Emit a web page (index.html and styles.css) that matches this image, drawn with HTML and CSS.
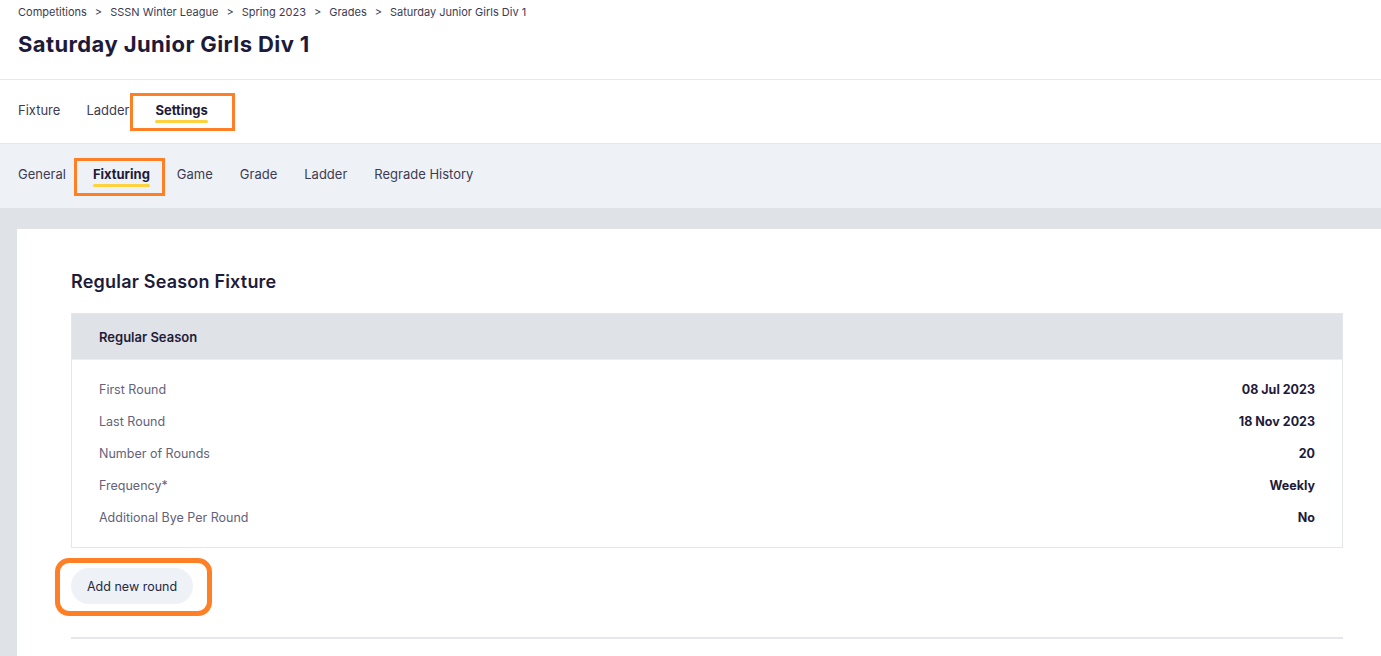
FILE: index.html
```html
<!DOCTYPE html>
<html lang="en">
<head>
    <meta charset="UTF-8">
    <title>Saturday Junior Girls Div 1</title>
    <link rel="stylesheet" href="styles.css">
</head>
<body>
    <header class="page-head">
        <nav class="crumbs">
            <a>Competitions</a><span class="sep">&gt;</span>
            <a>SSSN Winter League</a><span class="sep">&gt;</span>
            <a>Spring 2023</a><span class="sep">&gt;</span>
            <a>Grades</a><span class="sep">&gt;</span>
            <a>Saturday Junior Girls Div 1</a>
        </nav>
        <h1>Saturday Junior Girls Div 1</h1>
    </header>

    <div class="tabs">
        <a class="tab">Fixture</a>
        <a class="tab">Ladder</a>
        <a class="tab active marked">Settings</a>
    </div>

    <div class="subtabs">
        <a class="tab">General</a>
        <a class="tab active marked">Fixturing</a>
        <a class="tab">Game</a>
        <a class="tab">Grade</a>
        <a class="tab">Ladder</a>
        <a class="tab">Regrade History</a>
    </div>

    <main class="content">
        <section class="card">
            <h2>Regular Season Fixture</h2>
            <div class="panel">
                <div class="panel-head">Regular Season</div>
                <div class="panel-body">
                    <div class="row"><span>First Round</span><b>08 Jul 2023</b></div>
                    <div class="row"><span>Last Round</span><b>18 Nov 2023</b></div>
                    <div class="row"><span>Number of Rounds</span><b>20</b></div>
                    <div class="row"><span>Frequency*</span><b>Weekly</b></div>
                    <div class="row"><span>Additional Bye Per Round</span><b>No</b></div>
                </div>
            </div>
            <div class="actions">
                <button class="pill-btn marked-round">Add new round</button>
            </div>
            <hr class="divider">
        </section>
    </main>
</body>
</html>
```

FILE: styles.css
```css
body {
    margin: 0;
    font-family: Inter, "Noto Sans", sans-serif;
    color: #1e1b3a;
    background: #dfe2e7;
    overflow: hidden;
}
.page-head {
    background: white;
    padding: 4px 18px 0;
    height: 75px;
    border-bottom: 1px solid #e6e8eb;
}
.crumbs {
    font-size: 11px;
    color: #3d3b52;
    display: flex;
    align-items: center;
    height: 15px;
}
.crumbs .sep {
    margin: 0 8px;
}
h1 {
    margin: 12px 0 0;
    font-size: 22px;
    font-weight: 700;
    letter-spacing: 0.4px;
    color: #1e1b3a;
}
.tabs, .subtabs {
    display: flex;
    align-items: center;
    padding: 0 18px;
}
.tabs {
    background: white;
    height: 63px;
    border-bottom: 1px solid #e3e6ea;
}
.subtabs {
    background: #eef2f7;
    height: 64px;
}
.tab {
    font-size: 13px;
    color: #3d3b52;
    margin-right: 26px;
    position: relative;
    padding: 4px 0 8px;
}
.subtabs .tab {
    margin-right: 27px;
}
.tab.active {
    font-weight: 700;
    color: #1e1b3a;
}
.tab.active::before {
    content: "";
    position: absolute;
    left: 0;
    right: 0;
    bottom: 3px;
    height: 3px;
    border-radius: 2px;
    background: #fcd23f;
}
.marked::after {
    content: "";
    position: absolute;
    border: 3px solid #ff7f27;
    left: -25px;
    right: -27px;
    top: -5px;
    bottom: -5px;
}
.subtabs .marked::after {
    left: -19px;
    right: -15px;
    top: -4px;
    bottom: -6px;
}
.content {
    padding: 21px 0 0 17px;
}
.card {
    background: white;
    padding: 42px 38px 40px 54px;
    min-height: 500px;
}
h2 {
    margin: 0 0 21px;
    font-size: 18px;
    font-weight: 600;
    letter-spacing: 0.2px;
    color: #1e1b3a;
}
.panel {
    border: 1px solid #e3e6ea;
}
.panel-head {
    background: #dfe2e7;
    height: 45px;
    display: flex;
    align-items: center;
    padding-left: 27px;
    font-size: 13px;
    font-weight: 600;
}
.panel-body {
    padding: 13px 27px 14px;
    border-top: 1px solid #eceef1;
}
.row {
    display: flex;
    justify-content: space-between;
    align-items: center;
    height: 32px;
    font-size: 12.5px;
}
.row span {
    color: #63627a;
}
.row b {
    font-weight: 700;
    color: #1e1b3a;
}
.actions {
    padding: 20px 0 0;
}
.pill-btn {
    font-family: inherit;
    font-size: 12.5px;
    color: #2a2840;
    background: #eef1f6;
    border: none;
    border-radius: 18px;
    height: 36px;
    padding: 0 16px;
    position: relative;
}
.marked-round::after {
    content: "";
    position: absolute;
    border: 5px solid #ff7f27;
    border-radius: 14px;
    left: -16px;
    right: -19px;
    top: -10px;
    bottom: -12px;
}
.divider {
    border: none;
    border-top: 2px solid #e6e7ec;
    margin: 33px 0 0;
}
```
